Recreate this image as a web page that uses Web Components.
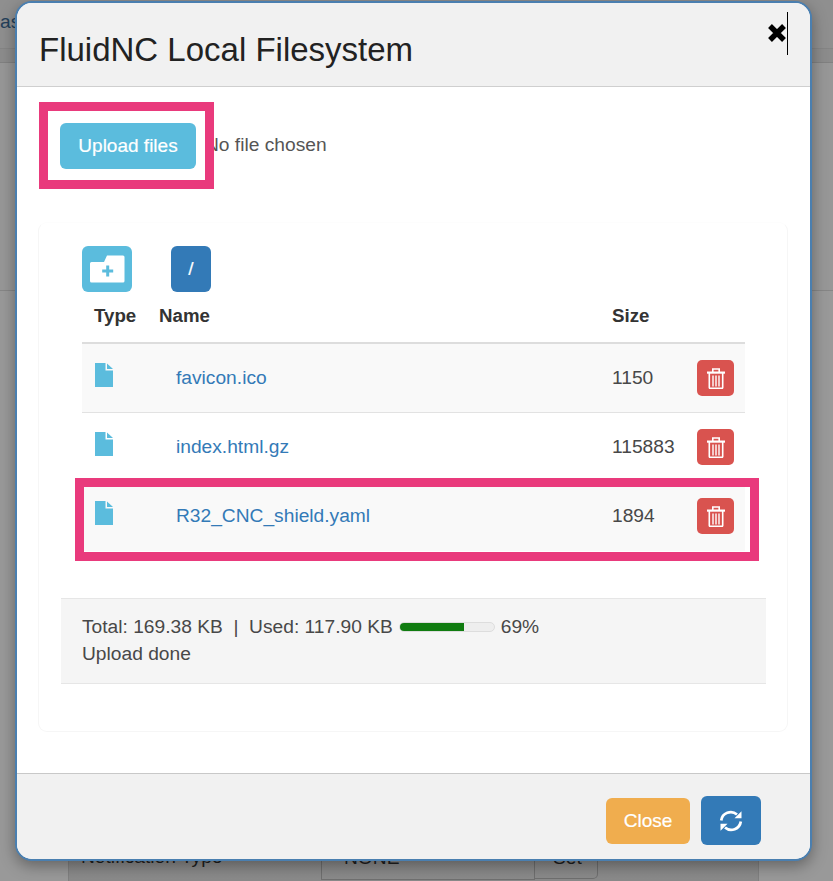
<!DOCTYPE html>
<html>
<head>
<meta charset="utf-8">
<title>FluidNC Local Filesystem</title>
<style>
  html, body { margin: 0; padding: 0; height: 881px; overflow: hidden; }
  body { font: 19.2px/1.43 "Liberation Sans", Arial, sans-serif; color: #333; background: #999; }
</style>
</head>
<body>
<page-backdrop></page-backdrop>
<fs-modal>
  <span slot="title">FluidNC Local Filesystem</span>
  <upload-row></upload-row>
  <fs-card>
    <fs-toolbar></fs-toolbar>
    <fs-table>
      <fs-row name="favicon.ico" size="1150" striped></fs-row>
      <fs-row name="index.html.gz" size="115883"></fs-row>
      <fs-row name="R32_CNC_shield.yaml" size="1894" striped></fs-row>
    </fs-table>
    <fs-status total="169.38 KB" used="117.90 KB" percent="69" message="Upload done"></fs-status>
  </fs-card>
  <fs-button slot="footer" kind="warning" w="84" h="46">Close</fs-button>
  <fs-button slot="footer" kind="primary" w="60" h="49">
    <svg width="24" height="24" viewBox="0 0 24 24" style="display:block">
      <g fill="none" stroke="#fff" stroke-width="2.700">
        <path d="M2.200 11.500A9.600 9.600 0 0 1 18 5.500"/>
        <path d="M21.800 12.500A9.600 9.600 0 0 1 6 18.500"/>
      </g>
      <path fill="#fff" d="M22.500 2.200V9.200H15.500zM1.500 21.800V14.800H8.500z"/>
    </svg>
  </fs-button>
</fs-modal>
<script>
function define(tag, html, setup) {
  const template = document.createElement('template');
  template.innerHTML = html;
  customElements.define(tag, class extends HTMLElement {
    constructor() {
      super();
      this.attachShadow({ mode: 'open' }).appendChild(template.content.cloneNode(true));
    }
    connectedCallback() {
      if (setup) setup(this, this.shadowRoot);
    }
  });
}

// what is left visible of the page behind the dialog
define('page-backdrop', `
<style>
  :host { display: flex; flex-direction: column; height: 881px; overflow: hidden; background: #999; color: #1f1f1f; }
  .nav { height: 48px; background: #8f8f8f; border-bottom: 1px solid #858585; color: #24405a; line-height: 44px; }
  .band { height: 13px; background: #8c8c8c; border-bottom: 1px solid #818181; }
  .top { height: 227px; background: #979797; border-bottom: 1px solid #868686; }
  .rest { flex: 1; display: flex; flex-direction: column; justify-content: flex-end; }
  .panel { margin: 0 74px 0 68px; height: 80px; border: solid #808080; border-width: 0 1px; display: flex; background: linear-gradient(#8c8c8c, #8a8a8a); }
  .label { width: 252px; padding: 43px 0 0 12px; box-sizing: border-box; line-height: 26px; }
  .input { width: 214px; height: 79px; box-sizing: border-box; border: 1px solid #6f6f6f; padding: 43px 0 0 22px; line-height: 26px; }
  .set { width: 63px; height: 78px; box-sizing: border-box; border: 1px solid #6f6f6f; border-left: 0; border-radius: 0 0 5px 0; padding: 43px 0 0 18px; line-height: 26px; }
</style>
<div class="nav">as</div>
<div class="band"></div>
<div class="top"></div>
<div class="rest">
  <div class="panel">
    <div class="label">Notification Type</div>
    <div class="input">NONE</div>
    <div class="set">Set</div>
  </div>
</div>
`);

define('fs-modal', `
<style>
  :host {
    position: absolute; left: 15px; top: 1px; width: 797px; height: 860px;
    box-sizing: border-box; display: flex; flex-direction: column;
    background: #fff; border: 2px solid #4a7fb0; border-radius: 17px; overflow: hidden;
    box-shadow: 0 5px 15px rgba(0,0,0,.35);
  }
  .head { height: 83px; flex: none; background: #f1f1f1; border-bottom: 1px solid #cfcfcf; box-sizing: content-box; padding-left: 22px; display: flex; align-items: center; position: relative; }
  .title { font-size: 33px; color: #222; line-height: 1; position: relative; top: 5px; }
  .x { position: absolute; left: 750px; top: 20px; width: 22px; height: 22px; }
  .cursor { position: absolute; left: 770px; top: 9px; width: 1px; height: 43px; background: #000; }
  .body { flex: 1; position: relative; }
  .foot { height: 86px; flex: none; box-sizing: border-box; background: #f1f1f1; border-top: 1px solid #c8c8c8; padding: 23px 49px 15px 0; display: flex; justify-content: flex-end; align-items: center; gap: 11px; }
  .mark { position: absolute; box-sizing: border-box; border: 9px solid #e93a7c; }
  .m1 { left: 22px; top: 15px; width: 175px; height: 87px; }
  .m2 { left: 58px; top: 391px; width: 684px; height: 83px; }
</style>
<div class="head">
  <span class="title"><slot name="title"></slot></span>
  <span class="x" aria-label="close"><svg width="20" height="20" viewBox="0 0 20 20" style="display:block"><path d="M3 3L17 17M17 3L3 17" stroke="#000" stroke-width="5.4" fill="none"/></svg></span>
  <span class="cursor"></span>
</div>
<div class="body">
  <slot></slot>
  <div class="mark m1"></div>
  <div class="mark m2"></div>
</div>
<div class="foot"><slot name="footer"></slot></div>
`);

define('fs-button', `
<style>
  :host { display: inline-flex; align-items: center; justify-content: center; box-sizing: border-box; flex: none; color: #fff; border-radius: 6px; font-size: 19px; -webkit-text-stroke: .2px #fff; }
</style>
<slot></slot>
`, (el) => {
  const colors = { warning: '#f0ad4e', primary: '#337ab7', info: '#5bbcdd', danger: '#d9534f' };
  el.style.background = colors[el.getAttribute('kind')];
  el.style.width = el.getAttribute('w') + 'px';
  el.style.height = el.getAttribute('h') + 'px';
});

define('upload-row', `
<style>
  :host { display: flex; align-items: center; padding: 36px 0 0 43px; height: 46px; color: #555; }
  span { margin-left: 9px; position: relative; top: -1px; }
</style>
<fs-button kind="info" w="136" h="46">Upload files</fs-button>
<span>No file chosen</span>
`);

define('fs-card', `
<style>
  :host { display: block; box-sizing: border-box; margin: 53px 22px 0 21px; height: 510px; padding: 23px 0 0 0; border: 1px solid #f6f6f6; border-top-color: #fdfdfd; border-radius: 9px; }
</style>
<slot></slot>
`);

define('fs-toolbar', `
<style>
  :host { display: flex; gap: 39px; padding-left: 43px; }
  svg { display: block; }
</style>
<fs-button kind="info" w="50" h="46">
  <svg width="36" height="30" viewBox="0 0 36 30">
    <path fill="#fff" d="M1 9.500a1.500 1.500 0 0 1 1.500-1.500H15L18 1.500h16a1.500 1.500 0 0 1 1.500 1.500V27a1.500 1.500 0 0 1-1.500 1.500H2.500A1.500 1.500 0 0 1 1 27z"/>
    <path fill="#5bbcdd" d="M17.200 11.500h3v4h4v3h-4v4h-3v-4h-4v-3h4z"/>
  </svg>
</fs-button>
<fs-button kind="primary" w="40" h="46">/</fs-button>
`);

define('fs-table', `
<style>
  :host { display: block; margin: 0 42px 0 43px; }
  .head { display: flex; height: 52px; padding-bottom: 1px; box-sizing: border-box; align-items: center; font-size: 18.7px; font-weight: bold; border-bottom: 2px solid #ddd; color: #333; }
  .type { width: 77px; padding-left: 12px; box-sizing: border-box; }
  .name { width: 453px; }
</style>
<div class="head"><span class="type">Type</span><span class="name">Name</span><span>Size</span></div>
<slot></slot>
`);

define('fs-row', `
<style>
  :host { display: flex; height: 69px; box-sizing: border-box; align-items: flex-start; border-bottom: 1px solid #e2e2e2; color: #484848; }
  :host(:last-child) { border-bottom: 0; }
  .type { width: 94px; box-sizing: border-box; padding: 19px 0 0 13px; }
  .type svg { display: block; }
  a { width: 436px; padding-top: 20px; color: #337ab7; text-decoration: none; }
  .size { width: 85px; padding-top: 20px; }
  .del { padding-top: 16px; }
  fs-button { border-radius: 5px; }
</style>
<div class="type">
  <svg width="18" height="24" viewBox="0 0 18 24">
    <path fill="#5bbcdd" d="M0 0H10.500V7.500H18V24H0z"/>
    <path fill="#5bbcdd" d="M12 .5L18 6H12z"/>
  </svg>
</div>
<a href="#"></a>
<div class="size"></div>
<div class="del">
  <fs-button kind="danger" w="37" h="36">
    <svg width="18" height="21" viewBox="0 0 18 21" style="display:block">
      <g fill="none" stroke="#fff">
        <path stroke-width="1.600" d="M5.800 4V1h6.400v3"/>
        <path stroke-width="2.200" d="M0 4.600h18"/>
        <path stroke-width="1.600" d="M2.300 5v14.500a.8.8 0 0 0 .8.800h11.800a.8.8 0 0 0 .8-.8V5"/>
        <path stroke-width="1.400" d="M6 7.500V18.500M9 7.500V18.500M12 7.500V18.500"/>
      </g>
    </svg>
  </fs-button>
</div>
`, (el, root) => {
  root.querySelector('a').textContent = el.getAttribute('name');
  root.querySelector('.size').textContent = el.getAttribute('size');
  if (el.hasAttribute('striped')) el.style.background = '#f9f9f9';
});

define('fs-status', `
<style>
  :host { display: block; box-sizing: border-box; margin: 47px 21px 0 22px; height: 86px; padding: 14px 21px 0; background: #f5f5f5; border: solid #e6e6e6; border-width: 1px 0 1px; color: #484848; line-height: 27px; }
  .line { display: flex; align-items: center; white-space: pre; }
  .bar { width: 96px; height: 10px; margin: 0 6px 0 6px; box-sizing: border-box; background: #eee; border: 1px solid #ddd; border-radius: 5px; overflow: hidden; }
  .fill { height: 100%; background: #107c10; margin: -1px 0 0 -1px; padding-bottom: 2px; }
</style>
<div class="line"><span class="usage"></span><div class="bar"><div class="fill"></div></div><span class="pct"></span></div>
<div class="msg"></div>
`, (el, root) => {
  const percent = el.getAttribute('percent');
  root.querySelector('.usage').textContent = `Total: ${el.getAttribute('total')}  |  Used: ${el.getAttribute('used')}`;
  root.querySelector('.fill').style.width = percent + '%';
  root.querySelector('.pct').textContent = percent + '%';
  root.querySelector('.msg').textContent = el.getAttribute('message');
});
</script>
</body>
</html>
